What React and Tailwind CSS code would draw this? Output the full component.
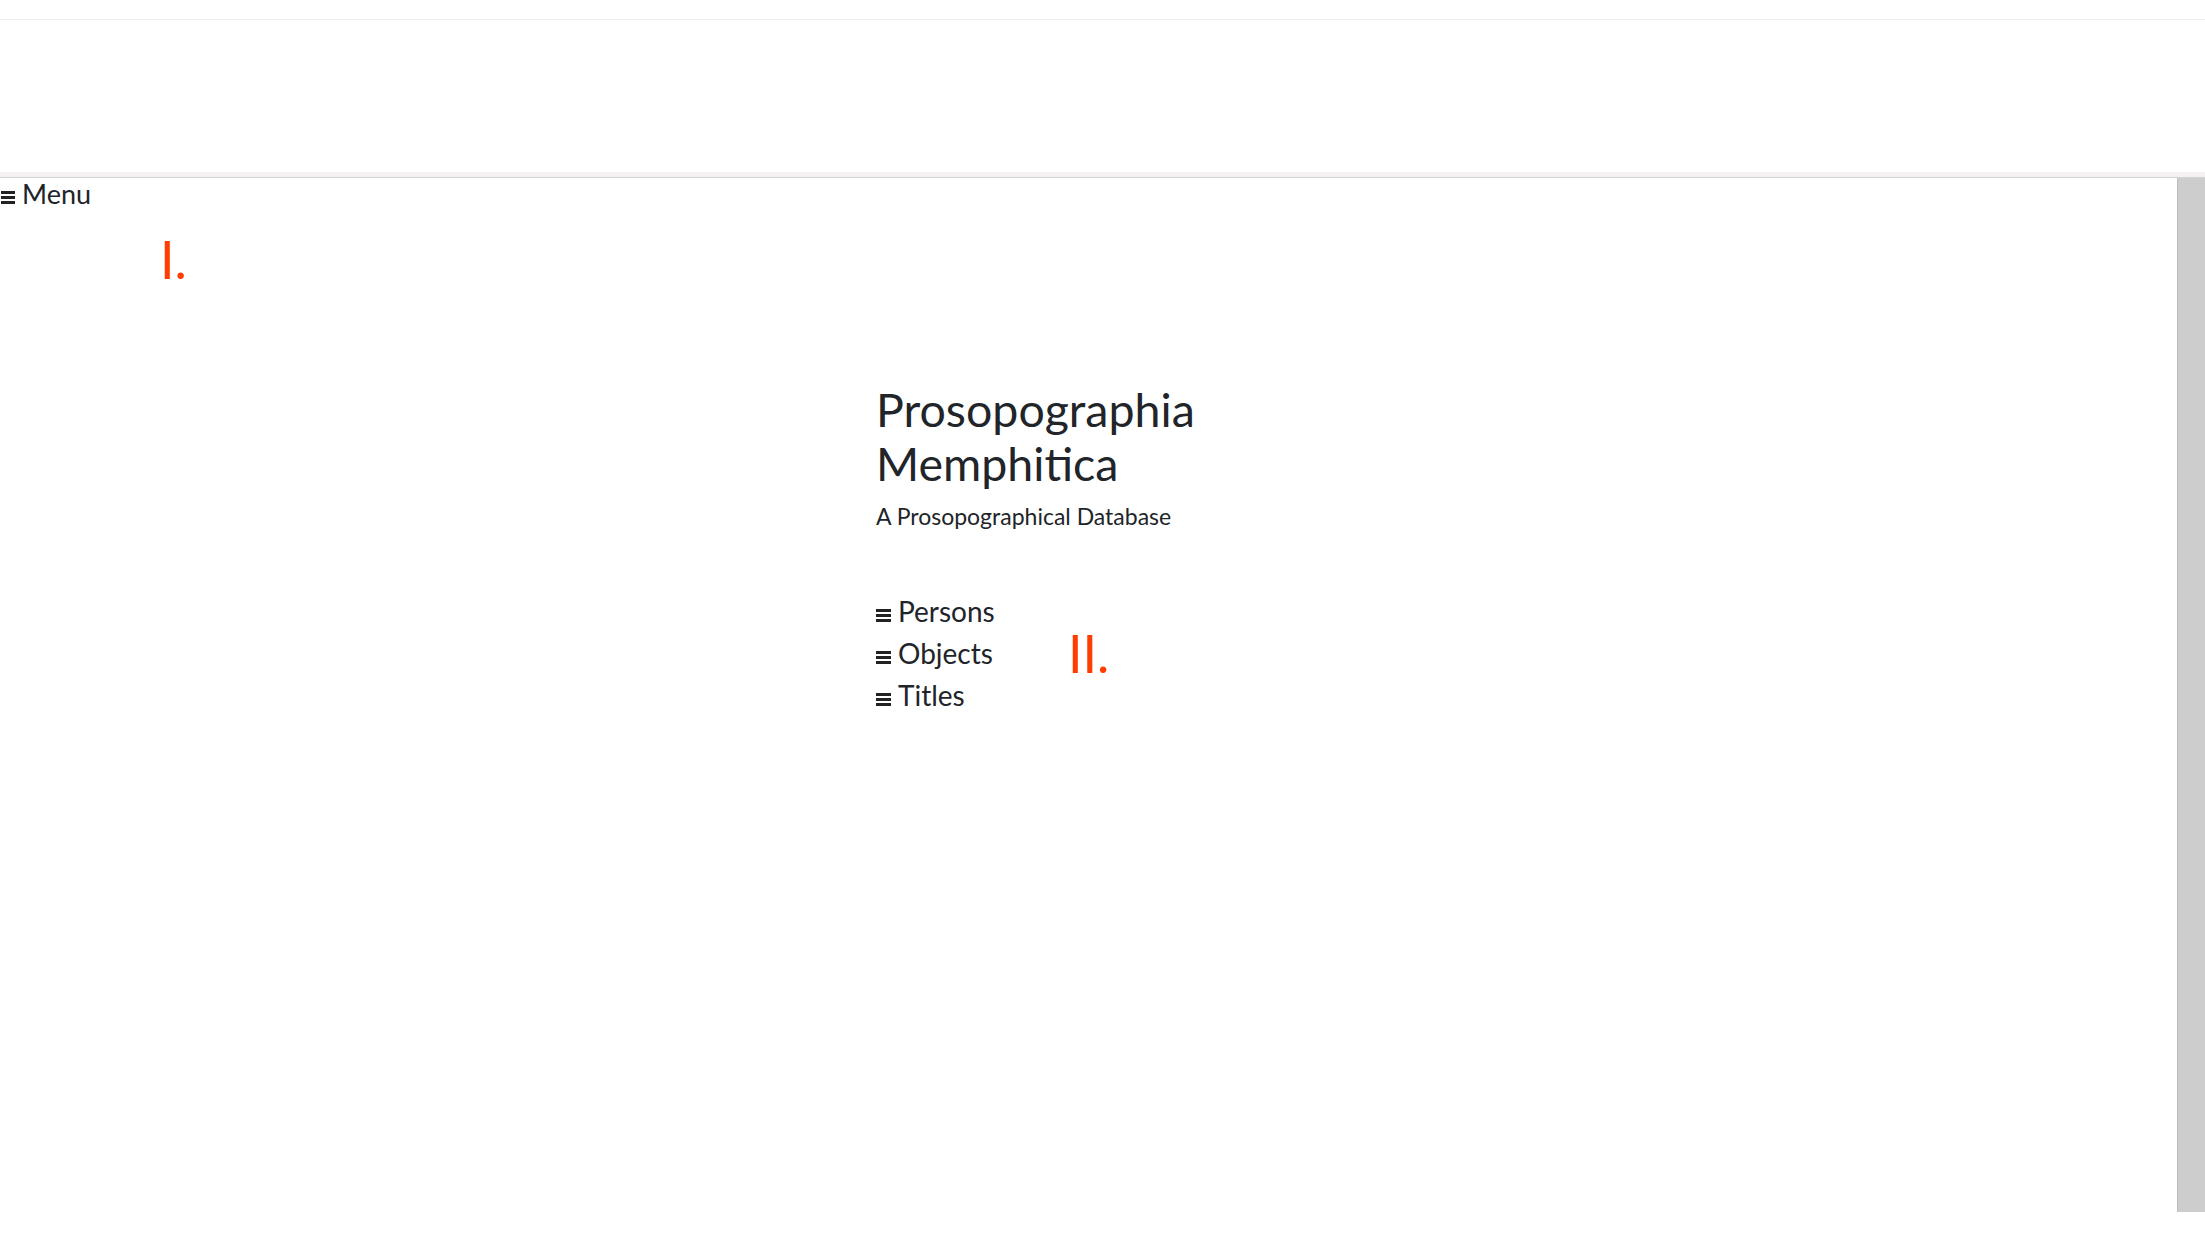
import React from "react";

function Bars({ w = 15 }) {
  return (
    <svg width={w} height="13" viewBox={`0 0 ${w} 13`} className="inline-block align-baseline">
      <rect x="0" y="0" width={w} height="3" fill="#222" />
      <rect x="0" y="5" width={w} height="3" fill="#222" />
      <rect x="0" y="10" width={w} height="3" fill="#222" />
    </svg>
  );
}

export default function App() {
  const items = ["Persons", "Objects", "Titles"];
  return (
    <div className="relative w-[2205px] h-[1241px] overflow-hidden bg-white font-['Lato','Noto_Sans',sans-serif] text-[#212529]">
      {/* top header */}
      <div className="flex flex-col h-[178px]">
        <div className="h-[20px] border-b border-[#efefef]" />
        <div className="flex-1" />
        <div className="h-[5px] bg-[#f4f1f0]" />
        <div className="h-[1px] bg-[#d3d3d3]" />
      </div>

      <div className="flex">
        <main className="flex-1 relative">
          <div className="flex items-baseline gap-[7px] pl-[1px] text-[27px] leading-[32px]">
            <Bars w={14} />
            <span>Menu</span>
          </div>

          <div className="ml-[876px] mt-[172px]">
            <h1 className="text-[46.5px] leading-[54px] font-normal">
              <span className="block">Prosopographia</span>
              <span className="block">Memphitica</span>
            </h1>
            <p className="mt-[12px] text-[23px] leading-[28px]">A Prosopographical Database</p>
            <ul className="mt-[60px] text-[28px] leading-[42px]">
              {items.map((t) => (
                <li key={t} className="flex items-baseline gap-[7px]">
                  <Bars />
                  <span>{t}</span>
                </li>
              ))}
            </ul>
          </div>

          <span className="absolute left-[160px] top-[55px] text-[52px] leading-none text-[#ff3d00]">I.</span>
          <span className="absolute left-[1068px] top-[449px] text-[52px] leading-none text-[#ff3d00]">II.</span>
        </main>
        <div className="w-[28px] h-[1034px] bg-[#cdcdcd] border-l border-[#bdbdbd]" />
      </div>
    </div>
  );
}
